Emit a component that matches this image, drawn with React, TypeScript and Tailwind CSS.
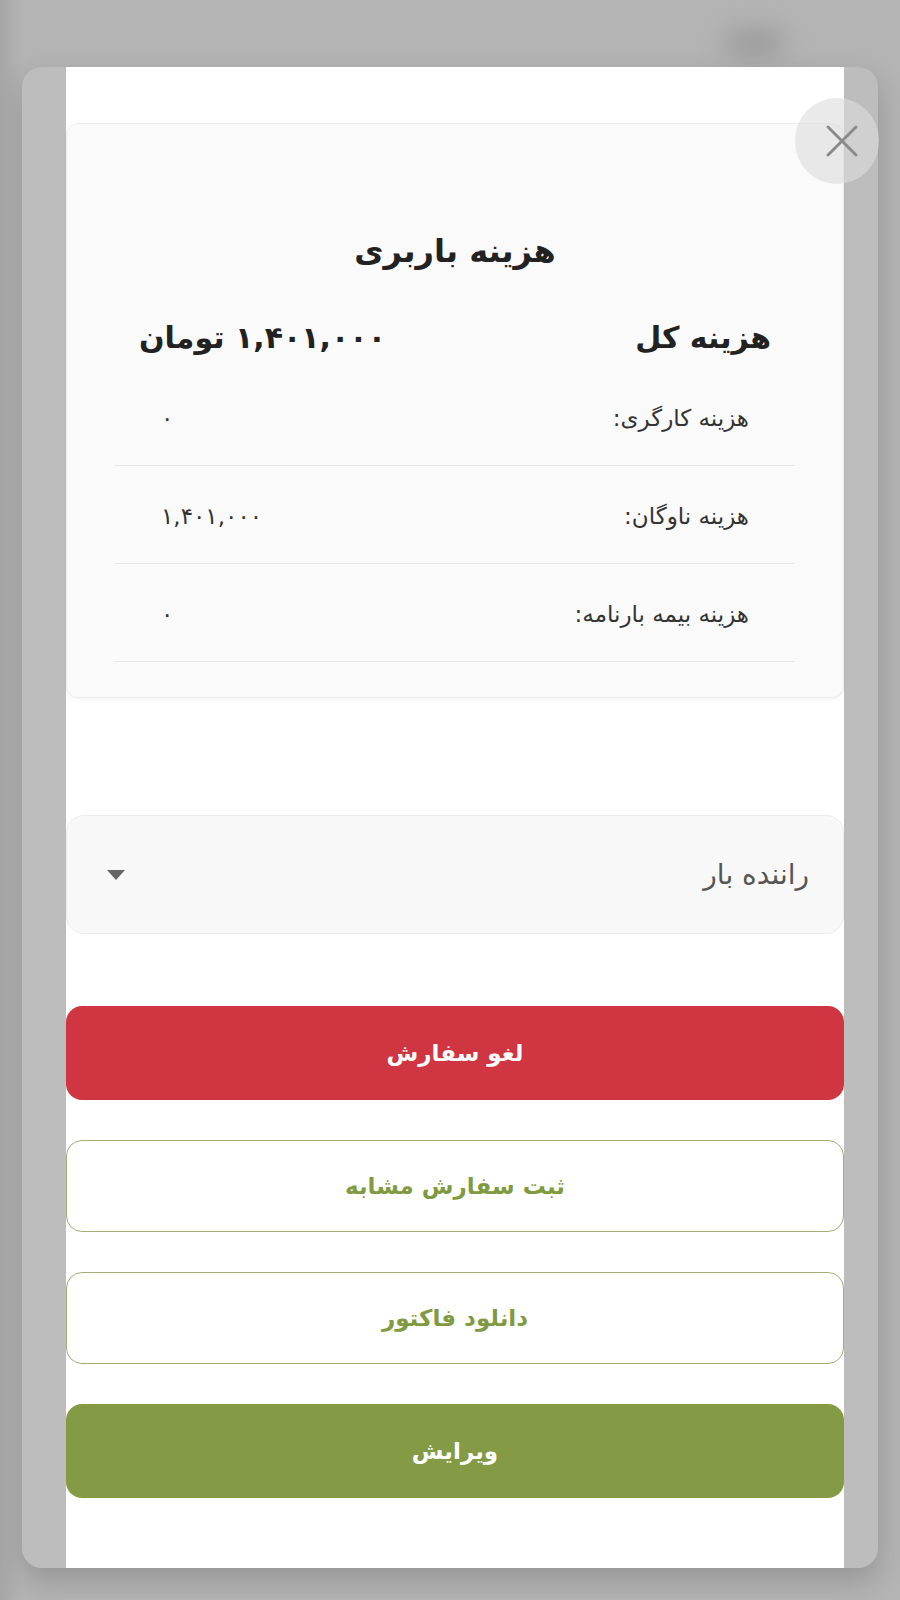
import { X } from 'lucide-react'

const rows = [
  { label: 'هزینه کارگری:', value: '۰' },
  { label: 'هزینه ناوگان:', value: '۱,۴۰۱,۰۰۰' },
  { label: 'هزینه بیمه بارنامه:', value: '۰' },
]

const font = { fontFamily: '"DejaVu Sans", "Noto Sans", sans-serif' }

export default function App() {
  return (
    <div className="relative min-h-[1600px] overflow-hidden bg-[#b4b4b4]" style={font}>
      {/* blurred page behind the sheet */}
      <div className="absolute left-[725px] top-[30px] h-[26px] w-[60px] rounded-full bg-[#9a9a9a] blur-md" />
      <div className="absolute left-0 top-0 h-full w-[22px] bg-gradient-to-r from-[#a6a6a6] to-[#b4b4b4]" />

      <div className="relative px-[22px] pt-[67px]">
        <div className="flex h-[1501px] rounded-[20px] bg-[#bdbdbd] pl-[44px] pr-[34px] shadow-[0_12px_30px_rgba(0,0,0,0.18)]">
          <div dir="rtl" className="relative flex w-full flex-col bg-white pt-[56px]">
            {/* close */}
            <button className="absolute left-[729px] top-[31px] flex h-[86px] w-[84px] items-center justify-center rounded-full bg-[rgba(220,220,220,0.6)]">
              <X size={56} strokeWidth={1.25} className="translate-x-[5px] text-[#8a8a8a]" />
            </button>

            {/* cost card */}
            <div className="rounded-[12px] border border-[#ececec] bg-[#fafafa] pb-[35px] pt-[107px] shadow-[0_2px_3px_rgba(0,0,0,0.04)]">
              <h2 className="text-center text-[32px] font-bold leading-[40px] text-[#222]">هزینه باربری</h2>
              <div className="mt-[47px] flex items-center justify-between px-[72px] text-[30px] font-bold leading-[40px] text-[#222]">
                <span>هزینه کل</span>
                <span>۱,۴۰۱,۰۰۰ تومان</span>
              </div>
              <div className="mx-[48px] mt-[10px]">
                {rows.map(r => (
                  <div
                    key={r.label}
                    className="flex h-[98px] items-center justify-between border-b border-[#e6e6e6] px-[46px] pt-[3px] text-[23px] text-[#333]"
                  >
                    <span>{r.label}</span>
                    <span>{r.value}</span>
                  </div>
                ))}
              </div>
            </div>

            {/* driver select */}
            <div className="mt-[117px] flex h-[119px] items-center justify-between rounded-[18px] border border-[#ececec] bg-[#f8f8f8] pl-[40px] pr-[34px]">
              <span className="text-[28px] text-[#555]">راننده بار</span>
              <svg width="18" height="10" viewBox="0 0 18 10">
                <path d="M0 0h18L9 10z" fill="#666" />
              </svg>
            </div>

            {/* actions */}
            <div className="mt-[72px] flex flex-col gap-[40px] text-[23px] font-bold">
              <button className="h-[94px] rounded-[16px] bg-[#d03641] text-white">لغو سفارش</button>
              <button className="h-[92px] rounded-[16px] border border-[#a3ae7c] bg-white text-[#7f9a40]">ثبت سفارش مشابه</button>
              <button className="h-[92px] rounded-[16px] border border-[#a3ae7c] bg-white text-[#7f9a40]">دانلود فاکتور</button>
              <button className="h-[94px] rounded-[16px] bg-[#849a45] text-white">ویرایش</button>
            </div>
          </div>
        </div>
      </div>
    </div>
  )
}
